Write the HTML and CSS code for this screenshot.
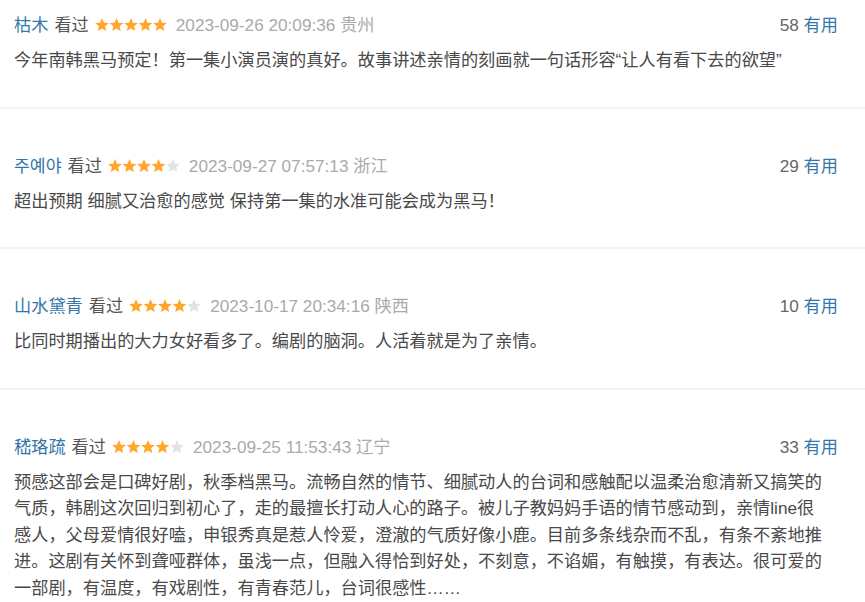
FILE: index.html
```html
<!DOCTYPE html>
<html lang="zh-CN">
<head>
<meta charset="utf-8">
<title>短评</title>
<link rel="stylesheet" href="styles.css">
</head>
<body>
<div class="list">
  <div class="review">
    <div class="head">
      <div class="info">
        <a class="name">枯木</a>
        <span class="watched">看过</span>
        <span class="stars"><svg viewBox="0 0 72 13.5" width="72" height="13.5"><use href="#st" x="0"/><use href="#st" x="14.5"/><use href="#st" x="29"/><use href="#st" x="43.5"/><use href="#st" x="58"/></svg></span>
        <span class="time">2023-09-26 20:09:36 贵州</span>
      </div>
      <div class="votes"><span class="num">58</span> <a class="useful">有用</a></div>
    </div>
    <p class="text">今年南韩黑马预定！第一集小演员演的真好。故事讲述亲情的刻画就一句话形容<span class="q">“</span>让人有看下去的欲望<span class="q">”</span></p>
  </div>
  <div class="review">
    <div class="head">
      <div class="info">
        <a class="name">주예야</a>
        <span class="watched">看过</span>
        <span class="stars"><svg viewBox="0 0 72 13.5" width="72" height="13.5"><use href="#st" x="0"/><use href="#st" x="14.5"/><use href="#st" x="29"/><use href="#st" x="43.5"/><use href="#st" x="58" class="off"/></svg></span>
        <span class="time">2023-09-27 07:57:13 浙江</span>
      </div>
      <div class="votes"><span class="num">29</span> <a class="useful">有用</a></div>
    </div>
    <p class="text">超出预期 细腻又治愈的感觉 保持第一集的水准可能会成为黑马！</p>
  </div>
  <div class="review">
    <div class="head">
      <div class="info">
        <a class="name">山水黛青</a>
        <span class="watched">看过</span>
        <span class="stars"><svg viewBox="0 0 72 13.5" width="72" height="13.5"><use href="#st" x="0"/><use href="#st" x="14.5"/><use href="#st" x="29"/><use href="#st" x="43.5"/><use href="#st" x="58" class="off"/></svg></span>
        <span class="time">2023-10-17 20:34:16 陕西</span>
      </div>
      <div class="votes"><span class="num">10</span> <a class="useful">有用</a></div>
    </div>
    <p class="text">比同时期播出的大力女好看多了。编剧的脑洞。人活着就是为了亲情。</p>
  </div>
  <div class="review">
    <div class="head">
      <div class="info">
        <a class="name">嵇珞疏</a>
        <span class="watched">看过</span>
        <span class="stars"><svg viewBox="0 0 72 13.5" width="72" height="13.5"><use href="#st" x="0"/><use href="#st" x="14.5"/><use href="#st" x="29"/><use href="#st" x="43.5"/><use href="#st" x="58" class="off"/></svg></span>
        <span class="time">2023-09-25 11:53:43 辽宁</span>
      </div>
      <div class="votes"><span class="num">33</span> <a class="useful">有用</a></div>
    </div>
    <p class="text">预感这部会是口碑好剧，秋季档黑马。流畅自然的情节、细腻动人的台词和感触配以温柔治愈清新又搞笑的<br>气质，韩剧这次回归到初心了，走的最擅长打动人心的路子。被儿子教妈妈手语的情节感动到，亲情line很<br>感人，父母爱情很好嗑，申银秀真是惹人怜爱，澄澈的气质好像小鹿。目前多条线杂而不乱，有条不紊地推<br>进。这剧有关怀到聋哑群体，虽浅一点，但融入得恰到好处，不刻意，不谄媚，有触摸，有表达。很可爱的<br>一部剧，有温度，有戏剧性，有青春范儿，台词很感性……</p>
  </div>
</div>
<svg width="0" height="0" class="defs">
  <defs>
    <polygon id="st" points="7,0.1 8.94,4.63 13.85,5.08 10.14,8.32 11.23,13.12 7,10.6 2.77,13.12 3.86,8.32 0.15,5.08 5.06,4.63"/>
  </defs>
</svg>
</body>
</html>
```

FILE: styles.css
```css
html, body {
  margin: 0;
  padding: 0;
  background: #ffffff;
}

body {
  font-family: "Liberation Sans", "Noto Sans CJK SC", sans-serif;
  color: #494949;
}

.review {
  padding: 44px 27px 33px 14px;
  border-bottom: 2px solid #f3f3f3;
}

.review:first-child {
  padding-top: 12px;
}

.review:last-child {
  border-bottom: none;
}

.head {
  display: flex;
  justify-content: space-between;
  align-items: center;
  height: 26px;
  font-size: 17.2px;
  line-height: 26px;
}

.info {
  display: flex;
  align-items: center;
  white-space: nowrap;
}

.name {
  color: #3377aa;
  margin-right: 6px;
}

.watched {
  color: #555555;
  margin-right: 6px;
}

.stars {
  display: inline-flex;
  align-items: center;
  margin-right: 9px;
  fill: #ffa62b;
}

.stars svg {
  display: block;
}

.stars .off {
  fill: #e2e2e2;
}

.time {
  color: #aaaaaa;
}

.votes {
  white-space: nowrap;
}

.num {
  color: #666666;
}

.useful {
  color: #3377aa;
}

.text {
  margin: 9px 0 0;
  font-size: 17.2px;
  line-height: 26.5px;
  white-space: nowrap;
  color: #494949;
}

.q {
  font-family: "Liberation Sans", sans-serif;
}

.defs {
  position: absolute;
  width: 0;
  height: 0;
}
```
